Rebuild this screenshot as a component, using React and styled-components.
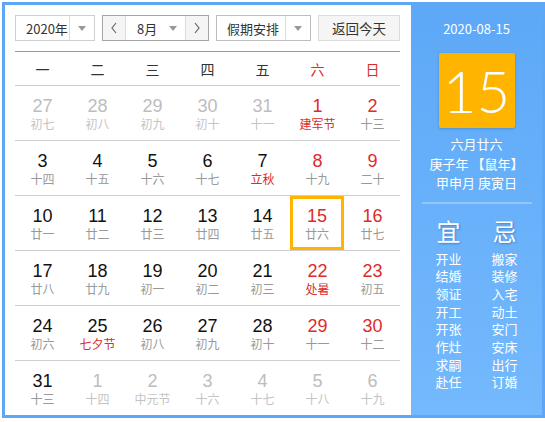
import React from "react";
import styled, { createGlobalStyle } from "styled-components";

const GlobalStyle = createGlobalStyle`
  html, body {
    margin: 0;
    padding: 0;
    background: #fff;
    overflow: hidden;
  }
  body {
    font-family: "Noto Sans CJK SC", "Noto Sans", sans-serif;
  }
`;

const CJK = `"Noto Sans CJK SC", "Noto Sans", sans-serif`;

const Frame = styled.div`
  margin: 2px 0 0 2px;
  width: 543px;
  height: 416px;
  box-sizing: border-box;
  border: 3px solid #5ea7f4;
  display: flex;
`;

const Main = styled.div`
  width: 406px;
  box-sizing: border-box;
  padding: 10px 11px 0 10px;
  display: flex;
  flex-direction: column;
`;

const Toolbar = styled.div`
  display: flex;
  gap: 7px;
  height: 26px;
  margin-bottom: 10px;
`;

const SelectBox = styled.div`
  display: flex;
  width: ${(p) => p.width}px;
  flex-shrink: 0;
  box-sizing: border-box;
  border: 1px solid ${(p) => p.borderColor || "#cfcfcf"};
  background: #fff;
  font-family: ${CJK};
  font-size: 13px;
  color: #333;
`;

const SelectLabel = styled.div`
  flex: 1;
  min-width: 0;
  display: flex;
  align-items: center;
  padding-left: ${(p) => p.pad || 10}px;
  white-space: nowrap;
`;

const ArrowPart = styled.div`
  width: 24px;
  flex-shrink: 0;
  display: flex;
  align-items: center;
  justify-content: center;
  border-left: 1px solid ${(p) => (p.noLine ? "transparent" : "#dcdcdc")};
`;

const Caret = styled.span`
  width: 0;
  height: 0;
  border-left: 4px solid transparent;
  border-right: 4px solid transparent;
  border-top: 5px solid #999;
`;

const NavButton = styled.div`
  width: 22px;
  flex-shrink: 0;
  display: flex;
  align-items: center;
  justify-content: center;
  background: #f5f5f5;
  border-left: ${(p) => (p.side === "right" ? "1px solid #dcdcdc" : "none")};
  border-right: ${(p) => (p.side === "left" ? "1px solid #dcdcdc" : "none")};
`;

const TodayButton = styled.div`
  width: 82px;
  flex-shrink: 0;
  box-sizing: border-box;
  border: 1px solid #dcdcdc;
  background: #f5f5f5;
  display: flex;
  align-items: center;
  justify-content: center;
  font-family: ${CJK};
  font-size: 13.5px;
  color: #333;
  white-space: nowrap;
`;

const WeekHeader = styled.div`
  display: grid;
  grid-template-columns: repeat(7, 55px);
  border-top: 1px solid #5ea7f4;
  height: 33px;
  align-items: center;
`;

const WeekDay = styled.div`
  text-align: center;
  font-family: ${CJK};
  font-size: 14px;
  color: ${(p) => (p.weekend ? "#e02a2a" : "#333")};
`;

const Row = styled.div`
  display: grid;
  grid-template-columns: repeat(7, 55px);
  border-top: 1px solid #cfcfcf;
  height: 54px;
`;

const Cell = styled.div`
  display: flex;
  flex-direction: column;
  align-items: center;
  padding-top: 10px;
  box-sizing: border-box;
  box-shadow: ${(p) => (p.today ? "inset 0 0 0 3px #ffb400" : "none")};
  margin-right: ${(p) => (p.today ? "1px" : "0")};
`;

const DayNum = styled.div`
  font-family: "Liberation Sans", Arial, sans-serif;
  font-size: 18px;
  line-height: 20px;
  color: ${(p) => (p.other ? "#bdbdbd" : p.weekend ? "#e02a2a" : "#111")};
`;

const Lunar = styled.div`
  font-family: ${CJK};
  font-size: 12px;
  line-height: 16px;
  color: ${(p) => (p.other ? "#c4c4c4" : p.festival ? "#e02a2a" : "#999")};
`;

const Side = styled.div`
  flex: 1;
  background: linear-gradient(#5da8f7, #74b9fd);
  color: #fff;
  display: flex;
  flex-direction: column;
  align-items: center;
  padding-top: 15px;
  font-family: ${CJK};
`;

const DateText = styled.div`
  font-size: 13px;
  line-height: 18px;
`;

const BigDay = styled.div`
  margin-top: 15px;
  width: 76px;
  height: 75px;
  background: #ffb400;
  border-radius: 2px;
  box-shadow: 0 1px 3px rgba(0, 0, 0, 0.18);
  display: flex;
  align-items: center;
  justify-content: center;
  font-family: Lato, "Open Sans", sans-serif;
  font-weight: 300;
  font-size: 58px;
  line-height: 1;
`;

const InfoLines = styled.div`
  margin-top: 6px;
  display: flex;
  flex-direction: column;
  align-items: center;
  font-size: 13px;
  line-height: 19.5px;
`;

const Divider = styled.div`
  margin-top: 9px;
  width: 110px;
  height: 2px;
  background: #93c8fb;
`;

const Almanac = styled.div`
  margin-top: 13px;
  display: grid;
  grid-template-columns: 56px 56px;
`;

const AlmanacCol = styled.div`
  display: flex;
  flex-direction: column;
  align-items: center;
`;

const AlmanacTitle = styled.div`
  font-size: 24px;
  line-height: 28px;
  margin-bottom: 5px;
  text-shadow: 1px 1px 2px rgba(0, 40, 100, 0.35);
`;

const AlmanacItem = styled.div`
  font-size: 13px;
  line-height: 17.7px;
`;

const Chevron = ({ dir }) => (
  <svg width="8" height="12" viewBox="0 0 8 12">
    <polyline
      points={dir === "left" ? "6,1 2,6 6,11" : "2,1 6,6 2,11"}
      fill="none"
      stroke="#666"
      strokeWidth="1.2"
    />
  </svg>
);

const weekDays = ["一", "二", "三", "四", "五", "六", "日"];

const rows = [
  [
    [27, "初七", "o"], [28, "初八", "o"], [29, "初九", "o"], [30, "初十", "o"],
    [31, "十一", "o"], [1, "建军节", "f"], [2, "十三"],
  ],
  [
    [3, "十四"], [4, "十五"], [5, "十六"], [6, "十七"], [7, "立秋", "f"],
    [8, "十九"], [9, "二十"],
  ],
  [
    [10, "廿一"], [11, "廿二"], [12, "廿三"], [13, "廿四"], [14, "廿五"],
    [15, "廿六", "t"], [16, "廿七"],
  ],
  [
    [17, "廿八"], [18, "廿九"], [19, "初一"], [20, "初二"], [21, "初三"],
    [22, "处暑", "f"], [23, "初五"],
  ],
  [
    [24, "初六"], [25, "七夕节", "f"], [26, "初八"], [27, "初九"], [28, "初十"],
    [29, "十一"], [30, "十二"],
  ],
  [
    [31, "十三"], [1, "十四", "o"], [2, "中元节", "o"], [3, "十六", "o"],
    [4, "十七", "o"], [5, "十八", "o"], [6, "十九", "o"],
  ],
];

const good = ["开业", "结婚", "领证", "开工", "开张", "作灶", "求嗣", "赴任"];
const bad = ["搬家", "装修", "入宅", "动土", "安门", "安床", "出行", "订婚"];

export default function App() {
  return (
    <>
      <GlobalStyle />
      <Frame>
        <Main>
          <Toolbar>
            <SelectBox width={80}>
              <SelectLabel>2020年</SelectLabel>
              <ArrowPart>
                <Caret />
              </ArrowPart>
            </SelectBox>
            <SelectBox width={107} borderColor="#a6a6a6">
              <NavButton side="left">
                <Chevron dir="left" />
              </NavButton>
              <SelectLabel pad={11}>8月</SelectLabel>
              <ArrowPart noLine>
                <Caret />
              </ArrowPart>
              <NavButton side="right">
                <Chevron dir="right" />
              </NavButton>
            </SelectBox>
            <SelectBox width={95} borderColor="#bdbdbd">
              <SelectLabel pad={10}>假期安排</SelectLabel>
              <ArrowPart>
                <Caret />
              </ArrowPart>
            </SelectBox>
            <TodayButton>返回今天</TodayButton>
          </Toolbar>

          <WeekHeader>
            {weekDays.map((d, i) => (
              <WeekDay key={d} weekend={i >= 5}>
                {d}
              </WeekDay>
            ))}
          </WeekHeader>

          {rows.map((row, r) => (
            <Row key={r}>
              {row.map(([n, lunar, flag], c) => {
                const other = flag === "o";
                return (
                  <Cell key={c} today={flag === "t"}>
                    <DayNum other={other} weekend={c >= 5}>
                      {n}
                    </DayNum>
                    <Lunar other={other} festival={flag === "f"}>
                      {lunar}
                    </Lunar>
                  </Cell>
                );
              })}
            </Row>
          ))}
        </Main>

        <Side>
          <DateText>2020-08-15</DateText>
          <BigDay>15</BigDay>
          <InfoLines>
            <div>六月廿六</div>
            <div>庚子年 【鼠年】</div>
            <div>甲申月 庚寅日</div>
          </InfoLines>
          <Divider />
          <Almanac>
            <AlmanacCol>
              <AlmanacTitle>宜</AlmanacTitle>
              {good.map((g) => (
                <AlmanacItem key={g}>{g}</AlmanacItem>
              ))}
            </AlmanacCol>
            <AlmanacCol>
              <AlmanacTitle>忌</AlmanacTitle>
              {bad.map((b) => (
                <AlmanacItem key={b}>{b}</AlmanacItem>
              ))}
            </AlmanacCol>
          </Almanac>
        </Side>
      </Frame>
    </>
  );
}
